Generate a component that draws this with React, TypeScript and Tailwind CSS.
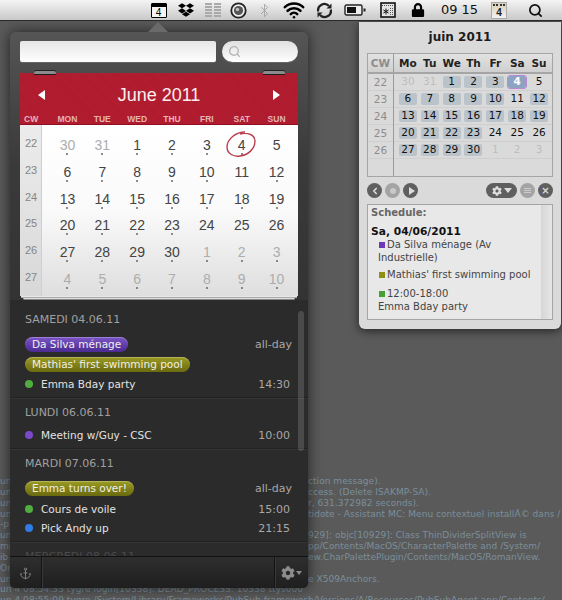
import type { ReactNode } from 'react'
import { Anchor, Bluetooth, ChevronLeft, Search, Wifi } from 'lucide-react'
import { FaCog, FaDropbox, FaLock } from 'react-icons/fa'

const lucida = 'font-["DejaVu_Sans",sans-serif]'
const helvetica = 'font-["Liberation_Sans",Arial,sans-serif]'

const consoleLines: [string, string][] = [
  ['un', 'ction message).'],
  ['un', 'ccess. (Delete ISAKMP-SA).'],
  ['un', 'r, 631.372982 seconds).'],
  ['un', 'tidote - Assistant MC: Menu contextuel installÃ© dans /'],
  ['-p', ''],
  ['un', '929]: objc[10929]: Class ThinDividerSplitView is'],
  ['mp', 'pp/Contents/MacOS/CharacterPalette and /System/'],
  ['ib', 'ew.CharPalettePlugin/Contents/MacOS/RomanView.'],
  ['On', ''],
  ['un', 'e X509Anchors.'],
  ['un  4 08:54:33 tygre login[10338]: DEAD_PROCESS: 10338 ttys000', ''],
  ['un  4 08:55:09 tygre /System/Library/Frameworks/PubSub.framework/Ve', 'h/Versions/A/Resources/PubSubAgent.app/Contents/'],
]

const bigWeeks = [
  { cw: 22, days: [[30, 1], [31, 1], [1, 0], [2, 0], [3, 0], [4, 0], [5, 3]] },
  { cw: 23, days: [[6, 0], [7, 0], [8, 0], [9, 0], [10, 0], [11, 2], [12, 0]] },
  { cw: 24, days: [[13, 0], [14, 0], [15, 0], [16, 0], [17, 0], [18, 0], [19, 0]] },
  { cw: 25, days: [[20, 0], [21, 0], [22, 0], [23, 0], [24, 2], [25, 2], [26, 2]] },
  { cw: 26, days: [[27, 0], [28, 0], [29, 0], [30, 0], [1, 1], [2, 1], [3, 1]] },
  { cw: 27, days: [[4, 1], [5, 1], [6, 1], [7, 1], [8, 1], [9, 1], [10, 1]] },
]

const miniWeeks = [
  { cw: 22, days: ['30', '31', '1', '2', '3', '4', '5'], muted: [0, 1], marked: [2, 3, 4] },
  { cw: 23, days: ['6', '7', '8', '9', '10', '11', '12'], muted: [], marked: [0, 1, 2, 3, 4, 6] },
  { cw: 24, days: ['13', '14', '15', '16', '17', '18', '19'], muted: [], marked: [0, 1, 2, 3, 4, 5, 6] },
  { cw: 25, days: ['20', '21', '22', '23', '24', '25', '26'], muted: [], marked: [0, 1, 2, 3] },
  { cw: 26, days: ['27', '28', '29', '30', '1', '2', '3'], muted: [4, 5, 6], marked: [0, 1, 2, 3] },
]

function Slot({ width, children }: { width: string; children: ReactNode }) {
  return <div className={`${width} flex shrink-0 items-center justify-center`}>{children}</div>
}

function MenuBar() {
  return (
    <div className="relative z-20 flex h-[21px] border-b border-[#2a2a2a] bg-gradient-to-b from-[#f4f4f4] to-[#c9c9c9] pl-[146px]">
      <Slot width="w-[25px]">
        <div className="flex h-[15px] w-[16px] flex-col overflow-hidden rounded-[1px] border border-black bg-[#f4f4f4]">
          <div className="h-[3px] shrink-0 bg-black" />
          <div className={`${helvetica} text-center text-[10px] leading-[11px] text-black`}>4</div>
        </div>
      </Slot>
      <Slot width="w-[29px]"><FaDropbox className="text-[16px] text-black" /></Slot>
      <Slot width="w-[25px]">
        <svg width="16" height="14" viewBox="0 0 16 14" fill="#a9a9a9">
          {[0, 3, 6, 9, 12].map((y) => (
            <g key={y}>
              <rect x="0" y={y} width="7" height="2" />
              <rect x="9" y={y} width="7" height="2" />
            </g>
          ))}
        </svg>
      </Slot>
      <Slot width="w-[26px]">
        <svg width="17" height="17" viewBox="0 0 17 17">
          <circle cx="8.5" cy="8.5" r="7.2" fill="#f0f0f0" stroke="#222" strokeWidth="1.8" />
          <circle cx="8.5" cy="8.5" r="4.6" fill="#555" />
          <circle cx="7.5" cy="7.5" r="1.8" fill="#bbb" />
        </svg>
      </Slot>
      <Slot width="w-[26px]"><Bluetooth size={15} strokeWidth={1.5} className="text-[#a5a5a5]" /></Slot>
      <Slot width="w-[34px]"><Wifi size={22} strokeWidth={2.8} className="text-black" /></Slot>
      <Slot width="w-[27px]">
        <svg width="17" height="17" viewBox="0 0 17 17" fill="none" stroke="#222" strokeWidth="2.2">
          <path d="M2.2 9.5A6.3 6.3 0 0 1 13 4" />
          <path d="M14.8 7.5A6.3 6.3 0 0 1 4 13" />
          <path d="M15.5 1.5v5h-5z" fill="#222" stroke="none" />
          <path d="M1.5 15.5v-5h5z" fill="#222" stroke="none" />
        </svg>
      </Slot>
      <Slot width="w-[34px]">
        <svg width="22" height="12" viewBox="0 0 22 12">
          <rect x="1" y="1" width="17" height="10" rx="1.5" fill="#eee" stroke="#222" strokeWidth="1.4" />
          <rect x="3" y="3" width="9" height="6" fill="#111" />
          <rect x="19.5" y="4.5" width="2" height="3" fill="#222" />
        </svg>
      </Slot>
      <Slot width="w-[31px]">
        <svg width="16" height="16" viewBox="0 0 16 16">
          <rect x="1" y="1" width="14" height="14" fill="#e4e4e4" stroke="#111" strokeWidth="1.6" />
          <path d="M2 3.5h12" stroke="#555" strokeWidth="1" strokeDasharray="1 1" />
          <path d="M6 6.5v6M3.4 8l5.2 3M8.6 8l-5.2 3" stroke="#111" strokeWidth="1" />
          <path d="M10.5 6v7M12.5 6v7" stroke="#555" strokeWidth="1" strokeDasharray="1 1" />
        </svg>
      </Slot>
      <Slot width="w-[30px]"><FaLock className="text-[14px] text-black" /></Slot>
      <Slot width="w-[53px]">
        <span className={`${lucida} text-[13px] text-[#111]`}>09 15</span>
      </Slot>
      <Slot width="w-[26px]">
        <div className="flex h-[17px] w-[16px] flex-col items-center border border-[#aaa] bg-gradient-to-b from-[#d8d0b8] to-[#f2f2f2]">
          <div className="mt-[1px] h-[3px] w-[12px] border-t-2 border-dotted border-[#333]" />
          <div className={`${helvetica} text-[10px] font-bold leading-[11px] text-[#222]`}>4</div>
        </div>
      </Slot>
      <Slot width="w-[46px]"><Search size={15} strokeWidth={2.8} className="text-[#111]" /></Slot>
    </div>
  )
}

function ConsoleBackdrop() {
  return (
    <div className={`${lucida} absolute left-0 top-[476px] w-[562px] overflow-hidden text-[9px] leading-[10.85px] tracking-[0.05px] text-[#7a8f9b]`}>
      {consoleLines.map(([left, right], i) => (
        <div key={i} className="flex h-[10.85px] overflow-hidden whitespace-nowrap">
          <span className="w-[308px] shrink-0 overflow-hidden">{left}</span>
          <span>{right}</span>
        </div>
      ))}
    </div>
  )
}

function BigCalendar() {
  return (
    <div className="relative mt-[11px] h-[227px]">
      <div className="absolute left-[14px] top-[-2px] h-[3px] w-[22px] rounded-t-[2px] bg-[#8b8b8b] shadow-[0_1px_0_#1c1c1c,0_-1px_0_#222]" />
      <div className="absolute left-[243px] top-[-2px] h-[3px] w-[22px] rounded-t-[2px] bg-[#8b8b8b] shadow-[0_1px_0_#1c1c1c,0_-1px_0_#222]" />
      <div className="h-[52px] border-b border-[#8f1022] bg-[#b01a2d] bg-[repeating-linear-gradient(45deg,rgba(255,255,255,0.02)_0,rgba(255,255,255,0.02)_1px,transparent_1px,transparent_2px)]">
        <div className="flex h-[41px] items-center justify-between px-[18px] pt-[3px]">
          <div className="h-0 w-0 border-y-[5px] border-r-[7px] border-y-transparent border-r-white" />
          <span className={`${helvetica} text-[18px] text-[#fbeeee]`}>June 2011</span>
          <div className="h-0 w-0 border-y-[5px] border-l-[7px] border-y-transparent border-l-white" />
        </div>
        <div className={`${helvetica} flex text-[8.5px] font-bold leading-[10px] text-[#e6b3b8]`}>
          <div className="w-[22px] pl-[4px]">CW</div>
          <div className="ml-[8px] grid w-[244px] grid-cols-7 text-center">
            {['MON', 'TUE', 'WED', 'THU', 'FRI', 'SAT', 'SUN'].map((d) => (
              <div key={d}>{d}</div>
            ))}
          </div>
        </div>
      </div>
      <div className="relative flex h-[171px] overflow-hidden bg-gradient-to-b from-white via-[#fafafa] to-[#dedede]">
        <div className="w-[22px] shrink-0 bg-gradient-to-b from-[#ececec] to-[#d8d8d8] pt-[12px] shadow-[inset_-1px_0_0_#cfcfcf]">
          {bigWeeks.map((w) => (
            <div key={w.cw} className={`${helvetica} h-[26.8px] text-center text-[11px] leading-[12px] text-[#858585]`}>
              {w.cw}
            </div>
          ))}
        </div>
        <div className="ml-[8px] grid h-fit w-[244px] grid-cols-7 pt-[12px]">
          {bigWeeks.flatMap((w) =>
            w.days.map(([day, tone], i) => (
              <div key={`${w.cw}-${i}`} className="flex h-[26.8px] flex-col items-center">
                <span className={`${helvetica} text-[14px] leading-[16px] ${tone === 1 ? 'text-[#adadad]' : 'text-[#444]'}`}>{day}</span>
                {tone !== 2 && tone !== 3 && <span className="h-[2px] w-[2px] rounded-full bg-[#666]" />}
              </div>
            )),
          )}
        </div>
        <svg className="absolute left-[205px] top-[5px]" width="32" height="30" viewBox="0 0 32 30" fill="none">
          <path d="M20 2C11 2 2 9 2 17c0 7 7 10 13 9 8-1 15-7 15-15 0-6-7-9-15-7" stroke="#b8404f" strokeWidth="1.4" />
        </svg>
      </div>
      <div className="mx-[1px] h-[2px] border-b border-[#aaa] bg-[#e8e8e8]" />
      <div className="mx-[3px] h-[2px] rounded-b-[2px] border-b border-[#888] bg-[#dcdcdc]" />
    </div>
  )
}

function Section({ title, children, className }: { title: string; children: ReactNode; className: string }) {
  return (
    <div className={`${className} border-b border-[#222] pb-[6px] pl-[15px] pr-[16px] shadow-[0_1px_0_#353535]`}>
      <div className="h-[14px] text-[11px] leading-[16px] text-[#a0a0a0]">{title}</div>
      {children}
    </div>
  )
}

function PillRow({ label, color, time, className }: { label: string; color: string; time?: string; className: string }) {
  return (
    <div className={`${className} flex h-[14px] items-center justify-between`}>
      <span className={`${color} flex h-[15px] items-center rounded-full px-[7px] pt-[1px] text-[10.5px] text-[#f0f0e8] shadow-[inset_0_1px_0_rgba(255,255,255,0.25)]`}>{label}</span>
      {time && <span className="mt-[2px] text-[11px] text-[#a8a8a8]">{time}</span>}
    </div>
  )
}

function EventRow({ label, dot, time, className }: { label: string; dot: string; time: string; className: string }) {
  return (
    <div className={`${className} flex h-[14px] items-center`}>
      <span className={`${dot} h-[8px] w-[8px] rounded-full`} />
      <span className="ml-[8px] mt-[2px] text-[10.5px] font-medium text-[#e2e2e2]">{label}</span>
      <span className="ml-auto mt-[2px] pr-[2px] text-[11px] text-[#a8a8a8]">{time}</span>
    </div>
  )
}

function MainPopover() {
  const purple = 'bg-gradient-to-b from-[#7d55c7] to-[#4a2a92]'
  const olive = 'bg-gradient-to-b from-[#9c9c24] to-[#6a6a10]'
  return (
    <>
      <div className="absolute left-[148px] top-[22px] z-20 h-0 w-0 border-x-[10px] border-b-[10px] border-x-transparent border-b-[#6a6a6a]" />
      <div className={`${lucida} absolute left-[10px] top-[32px] z-10 flex h-[556px] w-[298px] flex-col overflow-hidden rounded-[5px] bg-[#2b2b2b] shadow-[0_0_14px_rgba(0,0,0,0.65)]`}>
        <div className="bg-gradient-to-b from-[#555] via-[#3a3a3a] to-[#333] px-[10px] pt-[9px]">
          <div className="flex gap-[6px]">
            <div className="h-[21px] w-[196px] rounded-[2px] bg-gradient-to-b from-[#e6e6e6] to-white shadow-[0_1px_0_#666]" />
            <div className="flex h-[21px] w-[76px] items-center rounded-full bg-gradient-to-b from-[#e0e0e0] to-white pl-[6px] shadow-[0_1px_0_#666]">
              <Search size={13} strokeWidth={2.6} className="text-[#b5b5b5]" />
            </div>
          </div>
          <BigCalendar />
        </div>

        <Section title="SAMEDI 04.06.11" className="pt-[12px]">
          <PillRow className="mt-[11px]" label="Da Silva ménage" color={purple} time="all-day" />
          <PillRow className="mt-[6px]" label="Mathias' first swimming pool" color={olive} />
          <EventRow className="mt-[6px]" label="Emma Bday party" dot="bg-[#4fae3f]" time="14:30" />
        </Section>
        <Section title="LUNDI 06.06.11" className="pt-[7px]">
          <EventRow className="mt-[9px]" label="Meeting w/Guy - CSC" dot="bg-[#7a48c8]" time="10:00" />
        </Section>
        <Section title="MARDI 07.06.11" className="pt-[7px]">
          <PillRow className="mt-[11px]" label="Emma turns over!" color={olive} time="all-day" />
          <EventRow className="mt-[7px]" label="Cours de voile" dot="bg-[#4fae3f]" time="15:00" />
          <EventRow className="mt-[5px]" label="Pick Andy up" dot="bg-[#2f7be8]" time="21:15" />
        </Section>

        <div className="min-h-0 flex-1 overflow-hidden pl-[15px] pt-[7px] text-[11px] leading-[16px] text-[#4a4a4a]">MERCREDI 08.06.11</div>
        <div className="flex h-[32px] shrink-0 border-t border-[#111] bg-gradient-to-b from-[#2e2e2e] to-[#1f1f1f]">
          <div className="flex w-[32px] items-center justify-center border-r border-[#141414] pt-[1px] shadow-[1px_0_0_#383838]">
            <Anchor size={13} strokeWidth={1.6} className="text-[#8c8c8c]" />
          </div>
          <div className="flex-1" />
          <div className="flex w-[34px] items-center justify-center gap-[1px] border-l border-[#141414] shadow-[inset_1px_0_0_#383838]">
            <FaCog className="text-[14px] text-[#8c8c8c]" />
            <div className="h-0 w-0 border-x-[3px] border-t-[4px] border-x-transparent border-t-[#8c8c8c]" />
          </div>
        </div>
        <div className="absolute left-[288px] top-[279px] h-[140px] w-[6px] rounded-full bg-white/15" />
      </div>
    </>
  )
}

function RoundButton({ tone, children }: { tone: string; children?: ReactNode }) {
  return <div className={`${tone} flex h-[15px] w-[15px] items-center justify-center rounded-full`}>{children}</div>
}

function MiniCalendar() {
  return (
    <div className="border border-[#a5a5a5]">
      <div className="flex h-[20px] border-b-2 border-[#a5a5a5] bg-gradient-to-b from-[#e2e2e2] to-[#cfcfcf] text-[10.5px] font-bold leading-[18px]">
        <div className="w-[26px] border-r border-[#9a9a9a] text-center text-[#8d8d8d]">CW</div>
        <div className="ml-[3px] grid w-[153px] grid-cols-7 text-center text-[#222]">
          {['Mo', 'Tu', 'We', 'Th', 'Fr', 'Sa', 'Su'].map((d) => (
            <div key={d}>{d}</div>
          ))}
        </div>
      </div>
      <div className="flex h-[102px]">
        <div className="w-[26px] border-r border-[#9a9a9a]">
          {miniWeeks.map((w) => (
            <div key={w.cw} className="h-[17px] border-b border-[#cfcfcf] text-center text-[10.5px] leading-[16px] text-[#8d8d8d]">{w.cw}</div>
          ))}
        </div>
        <div className="flex-1">
          {miniWeeks.map((w) => (
            <div key={w.cw} className="h-[17px] border-b border-[#cfcfcf] pl-[3px]">
              <div className="grid w-[153px] grid-cols-7">
                {w.days.map((d, i) => {
                  const selected = w.cw === 22 && i === 5
                  const marked = w.marked.includes(i)
                  const muted = w.muted.includes(i)
                  return (
                    <div key={i} className="flex h-[16px] items-center justify-center">
                      <span
                        className={`flex h-[12px] w-[18px] items-center justify-center rounded-[2px] text-[10.5px] ${
                          selected
                            ? 'bg-[#8ea3c2] font-bold text-white outline outline-[#b98ad0]'
                            : marked
                              ? 'bg-[#bac3c9] text-[#111]'
                              : muted
                                ? 'text-[#bdbdbd]'
                                : 'text-[#111]'
                        }`}
                      >
                        {d}
                      </span>
                    </div>
                  )
                })}
              </div>
            </div>
          ))}
        </div>
      </div>
    </div>
  )
}

function SideWindow() {
  return (
    <div className={`${lucida} absolute left-[359px] top-[22px] flex h-[307px] w-[202px] flex-col rounded-b-[6px] bg-[#dadada] px-[8px] shadow-[0_2px_10px_rgba(0,0,0,0.6)]`}>
      <div className="h-[31px] pt-[7px] text-center text-[12px] font-bold leading-[16px] text-[#1c1c1c]">juin 2011</div>
      <MiniCalendar />
      <div className="mt-[6px] flex h-[15px] items-center">
        <div className="flex gap-[3px]">
          <RoundButton tone="bg-[#5f5f5f]"><ChevronLeft size={10} strokeWidth={4} className="text-[#ddd]" /></RoundButton>
          <RoundButton tone="bg-[#a4a4a4]"><div className="h-[6px] w-[6px] rounded-full bg-[#c9c9c9]" /></RoundButton>
          <RoundButton tone="bg-[#5f5f5f]"><div className="ml-[2px] h-0 w-0 border-y-[4px] border-l-[6px] border-y-transparent border-l-[#ddd]" /></RoundButton>
        </div>
        <div className="ml-auto flex items-center gap-[3px]">
          <div className="flex h-[15px] w-[31px] items-center justify-center gap-[2px] rounded-full bg-[#5f5f5f]">
            <FaCog className="text-[10px] text-[#ddd]" />
            <div className="h-0 w-0 border-x-[4px] border-t-[5px] border-x-transparent border-t-[#ddd]" />
          </div>
          <RoundButton tone="bg-[#a4a4a4]">
            <div className="flex flex-col gap-[1px]">
              <div className="h-[1px] w-[7px] bg-[#ccc]" />
              <div className="h-[1px] w-[7px] bg-[#ccc]" />
              <div className="h-[1px] w-[7px] bg-[#ccc]" />
            </div>
          </RoundButton>
          <RoundButton tone="bg-[#5f5f5f]"><span className="text-[10px] font-bold leading-none text-[#ddd]">×</span></RoundButton>
        </div>
      </div>
      <div className="mt-[6px] flex h-[116px] border border-[#a5a5a5] bg-[#e8e8e8]">
        <div className="flex-1 pl-[3px] pt-[1px] text-[10px] leading-[13px] text-[#444]">
          <div className="font-bold text-[#666]">Schedule:</div>
          <div className="mt-[6px] text-[10.7px] font-bold leading-[13px] text-[#111]">Sa, 04/06/2011</div>
          <div className="pl-[7px]">
            <span className="ml-[1px] mr-[2px] inline-block h-[6px] w-[6px] bg-[#6a38b8]" />Da Silva ménage (Av Industrielle)
          </div>
          <div className="mt-[4px] pl-[8px]">
            <span className="mr-[2px] inline-block h-[6px] w-[6px] bg-[#8f8f14]" />Mathias' first swimming pool
          </div>
          <div className="mt-[6px] pl-[8px]">
            <span className="mr-[2px] inline-block h-[6px] w-[6px] bg-[#45a035]" />12:00-18:00
            <div className="-ml-px">Emma Bday party</div>
          </div>
        </div>
        <div className="w-[11px] bg-gradient-to-r from-[#d6d6d6] to-[#e6e6e6]" />
      </div>
    </div>
  )
}

export default function App() {
  return (
    <div className="relative h-[600px] w-[562px] overflow-hidden bg-[#5a5a5a]">
      <MenuBar />
      <ConsoleBackdrop />
      <SideWindow />
      <MainPopover />
    </div>
  )
}
